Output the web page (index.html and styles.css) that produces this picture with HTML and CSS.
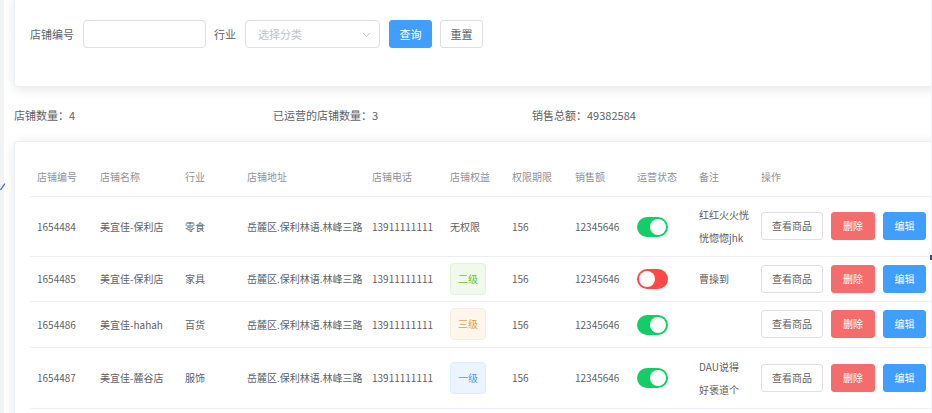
FILE: index.html
```html
<!DOCTYPE html>
<html lang="zh-CN">
<head>
<meta charset="utf-8">
<title>店铺管理</title>
<link rel="stylesheet" href="styles.css">
</head>
<body>
<div class="app">
  <svg class="edge-mark" width="6" height="9" viewBox="0 0 6 9"><path d="M0.5 8 L5 1.5" stroke="#3a6fc4" stroke-width="1.3" fill="none"/></svg>
  <div class="scroll-mark"></div>
  <main class="main">
    <section class="card filter-card">
      <div class="filter-row">
        <label class="f-label">店铺编号</label>
        <div class="input"></div>
        <label class="f-label f-label-2">行业</label>
        <div class="select">
          <span class="placeholder">选择分类</span>
          <svg class="chev" width="9" height="6" viewBox="0 0 9 6"><path d="M1 1 L4.5 4.5 L8 1" stroke="#c0c4cc" stroke-width="1" fill="none"/></svg>
        </div>
        <button class="btn btn-primary f-btn">查询</button>
        <button class="btn f-btn">重置</button>
      </div>
    </section>

    <div class="stats">
      <span>店铺数量：4</span>
      <span>已运营的店铺数量：3</span>
      <span>销售总额：49382584</span>
    </div>

    <section class="card table-card">
      <table class="tbl">
        <colgroup>
          <col class="c1"><col class="c2"><col class="c3"><col class="c4"><col class="c5">
          <col class="c6"><col class="c7"><col class="c8"><col class="c9"><col class="c10"><col class="c11">
        </colgroup>
        <thead>
          <tr>
            <th>店铺编号</th><th>店铺名称</th><th>行业</th><th>店铺地址</th><th>店铺电话</th>
            <th>店铺权益</th><th>权限期限</th><th>销售额</th><th>运营状态</th><th>备注</th><th>操作</th>
          </tr>
        </thead>
        <tbody>
          <tr class="r1">
            <td>1654484</td><td>美宜佳-保利店</td><td>零食</td><td>岳麓区.保利林语.林峰三路</td><td>13911111111</td>
            <td>无权限</td><td>156</td><td>12345646</td>
            <td><span class="switch on"></span></td>
            <td class="remark">红红火火恍<br>恍惚惚jhk</td>
            <td><div class="ops"><button class="btn op-view">查看商品</button><button class="btn btn-danger op-del">删除</button><button class="btn btn-primary op-edit">编辑</button></div></td>
          </tr>
          <tr class="r2">
            <td>1654485</td><td>美宜佳-保利店</td><td>家具</td><td>岳麓区.保利林语.林峰三路</td><td>13911111111</td>
            <td><span class="tag tag-success">二级</span></td><td>156</td><td>12345646</td>
            <td><span class="switch off"></span></td>
            <td class="remark">曹操到</td>
            <td><div class="ops"><button class="btn op-view">查看商品</button><button class="btn btn-danger op-del">删除</button><button class="btn btn-primary op-edit">编辑</button></div></td>
          </tr>
          <tr class="r3">
            <td>1654486</td><td>美宜佳-hahah</td><td>百货</td><td>岳麓区.保利林语.林峰三路</td><td>13911111111</td>
            <td><span class="tag tag-warning">三级</span></td><td>156</td><td>12345646</td>
            <td><span class="switch on"></span></td>
            <td class="remark"></td>
            <td><div class="ops"><button class="btn op-view">查看商品</button><button class="btn btn-danger op-del">删除</button><button class="btn btn-primary op-edit">编辑</button></div></td>
          </tr>
          <tr class="r4">
            <td>1654487</td><td>美宜佳-麓谷店</td><td>服饰</td><td>岳麓区.保利林语.林峰三路</td><td>13911111111</td>
            <td><span class="tag tag-primary">一级</span></td><td>156</td><td>12345646</td>
            <td><span class="switch on"></span></td>
            <td class="remark">DAU说得<br>好褒道个</td>
            <td><div class="ops"><button class="btn op-view">查看商品</button><button class="btn btn-danger op-del">删除</button><button class="btn btn-primary op-edit">编辑</button></div></td>
          </tr>
        </tbody>
      </table>
    </section>
  </main>
</div>
</body>
</html>
```

FILE: styles.css
```css
* { box-sizing: border-box; }
html, body { margin: 0; padding: 0; }
body {
  background: #f2f3f5;
  font-family: "Noto Sans CJK SC", "Noto Sans", sans-serif;
  color: #606266;
  width: 932px;
  height: 413px;
  overflow: hidden;
}
.app { position: relative; width: 932px; height: 413px; }
.edge-mark { position: absolute; left: 0; top: 182px; }
.scroll-mark { position: absolute; left: 930px; top: 255px; width: 2px; height: 5px; background: #2f4f86; z-index: 2; }

.main {
  margin-left: 4px;
  width: 927px;
  height: 413px;
  background: #fff;
  overflow: hidden;
  padding-left: 10px;
}

.card {
  background: #fff;
  border: 1px solid #ebeef5;
  border-radius: 4px;
  box-shadow: 0 2px 12px 0 rgba(0, 0, 0, 0.1);
  width: 940px;
}

.filter-card {
  margin-top: -5px;
  height: 92px;
  padding: 24px 0 0 15px;
}
.filter-row { display: flex; align-items: center; height: 28px; }
.f-label { font-size: 11px; color: #606266; margin-right: 9px; white-space: nowrap; }
.f-label-2 { margin-left: 8px; margin-right: 9px; }
.input {
  width: 123px; height: 28px;
  border: 1px solid #dcdfe6; border-radius: 4px; background: #fff;
}
.select {
  width: 135px; height: 28px;
  border: 1px solid #dcdfe6; border-radius: 4px; background: #fff;
  display: flex; align-items: center; justify-content: space-between;
  padding: 0 8px 0 12px;
}
.placeholder { font-size: 11px; color: #c0c4cc; }
.chev { margin-top: 1px; }

.btn {
  font-family: inherit;
  height: 28px;
  padding: 0;
  font-size: 10px;
  line-height: 26px;
  border: 1px solid #dcdfe6;
  border-radius: 3px;
  background: #fff;
  color: #606266;
  white-space: nowrap;
  text-align: center;
  cursor: pointer;
}
.btn-primary { background: #409eff; border-color: #409eff; color: #fff; }
.btn-danger { background: #f56c6c; border-color: #f56c6c; color: #fff; }
.f-btn { font-size: 11px; width: 43px; margin-left: 9px; }
.f-btn + .f-btn { margin-left: 8px; }
.op-view { width: 62px; }
.op-del { width: 44px; }
.op-edit { width: 43px; }

.stats {
  height: 54px;
  display: grid;
  grid-template-columns: 259px 259px 259px;
  align-items: center;
  font-size: 11px;
  color: #606266;
  padding-top: 1px;
}

.table-card {
  height: 300px;
  padding: 18px 0 0 15px;
}
.tbl {
  border-collapse: collapse;
  table-layout: fixed;
  width: 924px;
  font-size: 10px;
}
.c1 { width: 63px; } .c2 { width: 85px; } .c3 { width: 62px; } .c4 { width: 125px; }
.c5 { width: 78px; } .c6 { width: 62px; } .c7 { width: 63px; } .c8 { width: 62px; }
.c9 { width: 62px; } .c10 { width: 62px; } .c11 { width: 200px; }

.tbl th {
  height: 36px;
  padding: 0 0 2px 7px;
  text-align: left;
  font-weight: normal;
  color: #909399;
  border-bottom: 1px solid #ebeef5;
  white-space: nowrap;
}
.tbl td {
  padding: 0 0 0 7px;
  color: #606266;
  border-bottom: 1px solid #ebeef5;
  vertical-align: middle;
  white-space: nowrap;
  line-height: 23px;
}
.r1 td { height: 60px; }
.r2 td { height: 45px; }
.r3 td { height: 46px; }
.r4 td { height: 61px; }

.ops { display: flex; gap: 8px; }

.switch {
  display: block;
  position: relative;
  width: 31px;
  height: 20px;
  border-radius: 10px;
  margin-top: 1px;
}
.switch::after {
  content: "";
  position: absolute;
  top: 2px;
  width: 16px;
  height: 16px;
  border-radius: 50%;
  background: #fff;
}
.switch.on { background: #13ce66; }
.switch.on::after { right: 2px; }
.switch.off { background: #ff4949; }
.switch.off::after { left: 2px; }

.tag {
  display: inline-block;
  height: 32px;
  line-height: 30px;
  padding: 0 7px;
  border: 1px solid;
  border-radius: 4px;
  font-size: 10px;
}
.tag-success { background: #f0f9eb; border-color: #e1f3d8; color: #67c23a; }
.tag-warning { background: #fdf6ec; border-color: #faecd8; color: #e6a23c; }
.tag-primary { background: #ecf5ff; border-color: #d9ecff; color: #409eff; }
```
